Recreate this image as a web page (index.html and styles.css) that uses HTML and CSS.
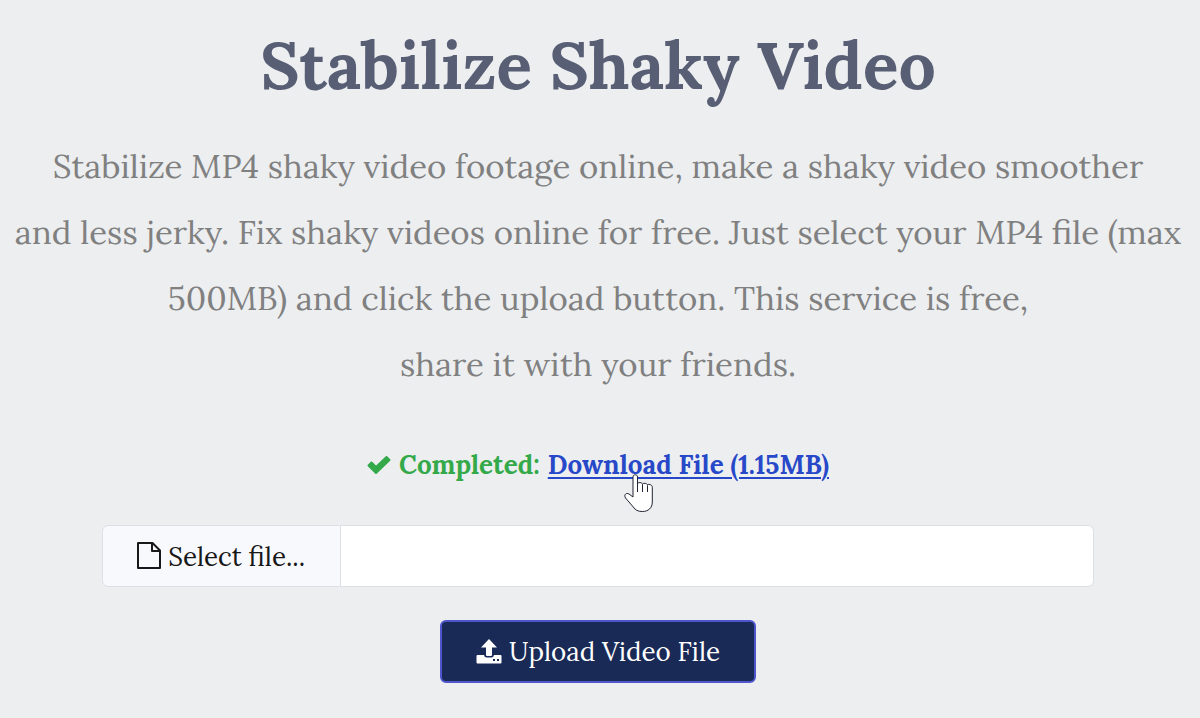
FILE: index.html
```
<!DOCTYPE html>
<html lang="en">
    <head>
        <meta charset="utf-8">
        <title>Stabilize Shaky Video</title>
        <link rel="stylesheet" href="styles.css">
    </head>
    <body>
        <main class="container">
            <h1>Stabilize Shaky Video</h1>
            <p class="lead">
                Stabilize MP4 shaky video footage online, make a shaky video smoother<br>
                and less jerky. Fix shaky videos online for free. Just select your MP4 file (max
                500MB) and click the upload button. This service is free,<br>
                share it with your friends.
            </p>
            <p class="status">
                <svg class="check" viewBox="0 0 24 20" aria-hidden="true"><path d="M1.500 10.500l3-3 4.500 4.500L19.500 2l3 3L9 18z"/></svg>
                <span>Completed:</span>
                <span class="download">
                    <a href="#">Download File (1.15MB)</a>
                    <svg class="cursor" viewBox="0 0 30 38" aria-hidden="true"><path d="M9 23V3c0-3 4.500-3 4.500 0v7c0-2 5-2 5 .5 0-2 5-1.500 5 .7 0-1.500 4.800-1 4.800 2V28c0 6-4 9.500-10 9.500-4.500 0-7-1.500-9-4.500L1.500 24c-2-3.500 1-5.500 3.500-4z"/><path d="M13.500 10v8M18.500 10.500v7.500M23.500 11.500v6.500"/></svg>
                </span>
            </p>
            <div class="file-row">
                <button type="button" class="select-file">
                    <svg class="file-icon" viewBox="0 0 24 28" aria-hidden="true"><path d="M1 1h14.500L23 8.500V26H1zM15 1v8h8"/></svg>
                    Select file...
                </button>
                <input type="text" class="file-name" aria-label="Selected file" readonly>
            </div>
            <button type="button" class="upload">
                <svg class="upload-icon" viewBox="0 0 26 26" aria-hidden="true"><path d="M13 0l8 8.500h-5V16q0 1-1 1h-4q-1 0-1-1V8.500H5z"/><path fill-rule="evenodd" d="M1.500 16H8q.5 2.500 2.500 2.500h5Q17.500 18.500 18 16h6.500q1 0 1 1v6.500q0 1-1 1h-23q-1 0-1-1V17q0-1 1-1zM17 20v2h2v-2zM21 20v2h2v-2z"/></svg>
                Upload Video File
            </button>
        </main>
    </body>
</html>
```
FILE: styles.css
```
*{
    box-sizing: border-box;
}
body{
    margin: 0;
    background-color: #eceef0;
    font-family: Lora, "Liberation Serif", serif;
    color: #808080;
}
.container{
    display: flex;
    flex-direction: column;
    align-items: center;
    padding: 23px 4px 20px 0;
    text-align: center;
}
h1{
    margin: 0;
    font-size: 66px;
    line-height: 84px;
    color: #585e74;
}
.lead{
    margin: 26px 0 0;
    font-size: 33px;
    line-height: 66px;
}
.status{
    display: flex;
    align-items: center;
    gap: 8px;
    margin: 50px 0 0;
    font-size: 26px;
    line-height: 36px;
    font-weight: bold;
    color: #34a94a;
}
.check{
    width: 24px;
    height: 20px;
    fill: #34a94a;
    stroke: #34a94a;
    stroke-width: 2;
    stroke-linejoin: round;
}
.download{
    position: relative;
}
.download a{
    color: #2748c8;
    text-decoration: underline;
    text-decoration-thickness: 2px;
    text-underline-offset: 3px;
}
.cursor{
    position: absolute;
    left: 76px;
    top: 27px;
    width: 30px;
    height: 38px;
    fill: #fff;
    stroke: #223;
    overflow: visible;
    pointer-events: none;
}
.file-row{
    display: flex;
    width: 83%;
    height: 62px;
    margin-top: 42px;
}
button{
    display: flex;
    align-items: center;
    justify-content: center;
    gap: 7px;
    font-family: inherit;
    font-size: 26px;
    cursor: pointer;
}
.select-file{
    width: 239px;
    border: 1px solid #dcdfe4;
    border-radius: 6px 0 0 6px;
    background-color: #f8f9fc;
    color: #181818;
}
.file-icon{
    width: 24px;
    height: 28px;
    fill: none;
    stroke: #181818;
    stroke-width: 2;
    stroke-linejoin: round;
}
.file-name{
    flex: 1;
    border: 1px solid #dcdfe4;
    border-left: 0;
    border-radius: 0 6px 6px 0;
    background-color: #fff;
}
.upload{
    width: 316px;
    height: 63px;
    margin-top: 33px;
    border: 2px solid #4f55cc;
    border-radius: 6px;
    background-color: #192a56;
    color: #fff;
}
.upload-icon{
    width: 26px;
    height: 26px;
    fill: #fff;
}
```
